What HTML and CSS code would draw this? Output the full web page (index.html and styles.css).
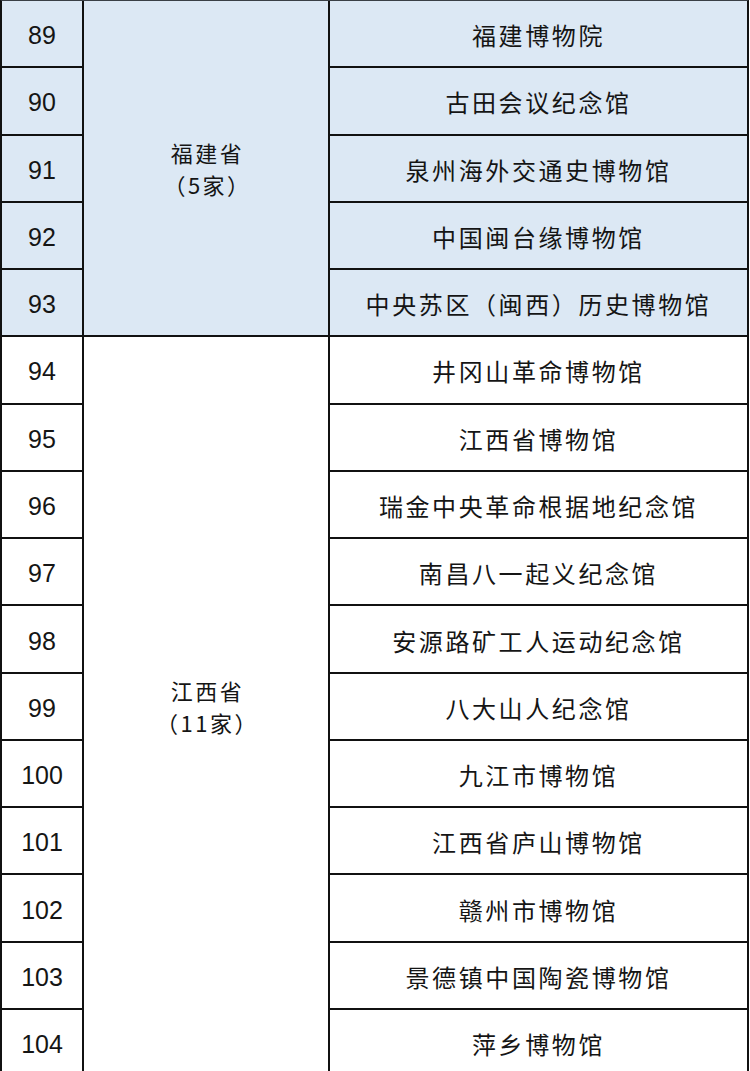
FILE: index.html
```html
<!DOCTYPE html>
<html lang="zh">
<head>
<meta charset="utf-8">
<link rel="stylesheet" href="styles.css">
</head>
<body>
<div class="table">
  <div class="num fj">89</div>
  <div class="prov fj p-fj"><p>福建省<br>（5家）</p></div>
  <div class="name fj">福建博物院</div>
  <div class="num fj">90</div>
  <div class="name fj">古田会议纪念馆</div>
  <div class="num fj">91</div>
  <div class="name fj">泉州海外交通史博物馆</div>
  <div class="num fj">92</div>
  <div class="name fj">中国闽台缘博物馆</div>
  <div class="num fj">93</div>
  <div class="name fj">中央苏区（闽西）历史博物馆</div>

  <div class="num">94</div>
  <div class="prov p-jx"><p>江西省<br>（11家）</p></div>
  <div class="name">井冈山革命博物馆</div>
  <div class="num">95</div>
  <div class="name">江西省博物馆</div>
  <div class="num">96</div>
  <div class="name">瑞金中央革命根据地纪念馆</div>
  <div class="num">97</div>
  <div class="name">南昌八一起义纪念馆</div>
  <div class="num">98</div>
  <div class="name">安源路矿工人运动纪念馆</div>
  <div class="num">99</div>
  <div class="name">八大山人纪念馆</div>
  <div class="num">100</div>
  <div class="name">九江市博物馆</div>
  <div class="num">101</div>
  <div class="name">江西省庐山博物馆</div>
  <div class="num">102</div>
  <div class="name">赣州市博物馆</div>
  <div class="num">103</div>
  <div class="name">景德镇中国陶瓷博物馆</div>
  <div class="num">104</div>
  <div class="name">萍乡博物馆</div>
</div>
</body>
</html>
```
FILE: styles.css
```css
html, body {
  margin: 0;
  padding: 0;
  background: #ffffff;
  overflow: hidden;
}
body {
  width: 750px;
  height: 1071px;
}
.table {
  display: grid;
  grid-template-columns: 80px 244px 417px;
  grid-template-rows: repeat(16, 65.27px);
  gap: 2px;
  background: #111111;
  width: 745px;
  border-left: 2px solid #111111;
  border-right: 2px solid #111111;
  border-top: 1px solid #3a3f45;
  color: #151515;
  font-family: "Noto Sans CJK SC", "Noto Sans", sans-serif;
}
.table > div {
  background: #ffffff;
  display: flex;
  align-items: center;
  justify-content: center;
}
.table > .fj {
  background: #dce8f4;
}
.num {
  font-family: "Liberation Sans", "Noto Sans", sans-serif;
  font-size: 25px;
  grid-column: 1;
  padding-top: 4px;
}
.name {
  grid-column: 3;
  font-size: 24px;
  letter-spacing: 2.6px;
  padding-top: 2px;
}
.prov {
  grid-column: 2;
  font-size: 22px;
  letter-spacing: 2.5px;
}
.prov p {
  margin: 0;
  line-height: 32px;
  text-align: center;
  padding-left: 3px;
}
.p-fj {
  grid-row: 1 / span 5;
}
.p-jx {
  grid-row: 6 / span 11;
}
```
